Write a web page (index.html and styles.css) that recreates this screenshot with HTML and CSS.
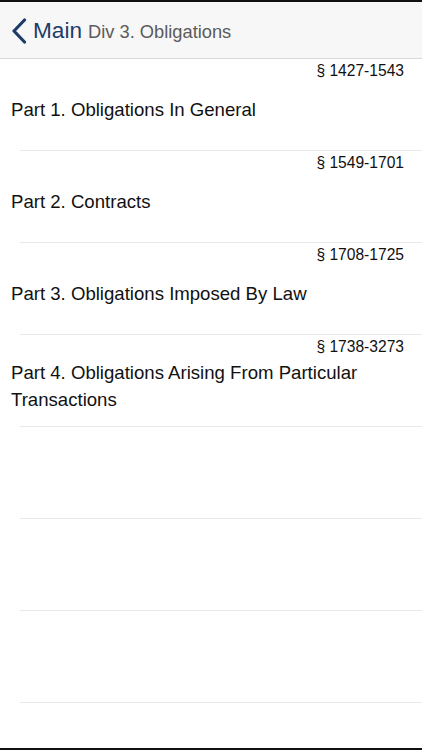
FILE: index.html
```html
<!DOCTYPE html>
<html>
<head>
<meta charset="utf-8">
<link rel="stylesheet" href="styles.css">
</head>
<body>
<div class="status"></div>
<header class="nav">
  <svg class="chev" width="16" height="26" viewBox="0 0 16 26"><path d="M13.5 2 L3 13 L13.5 24" fill="none" stroke="#1d3c68" stroke-width="3.2" stroke-linecap="round" stroke-linejoin="round"/></svg>
  <span class="back">Main</span>
  <span class="title">Div 3. Obligations</span>
</header>
<main class="list">
  <div class="row">
    <div class="range">§ 1427-1543</div>
    <div class="name">Part 1. Obligations In General</div>
  </div>
  <div class="row">
    <div class="range">§ 1549-1701</div>
    <div class="name">Part 2. Contracts</div>
  </div>
  <div class="row">
    <div class="range">§ 1708-1725</div>
    <div class="name">Part 3. Obligations Imposed By Law</div>
  </div>
  <div class="row">
    <div class="range">§ 1738-3273</div>
    <div class="name">Part 4. Obligations Arising From Particular Transactions</div>
  </div>
  <div class="row"></div>
  <div class="row"></div>
  <div class="row"></div>
</main>
<div class="bottom"></div>
</body>
</html>
```
FILE: styles.css
```css
html, body {
  margin: 0;
  padding: 0;
  background: #fff;
  font-family: "Liberation Sans", Arial, sans-serif;
  overflow: hidden;
}
body {
  width: 422px;
  height: 750px;
  position: relative;
}
.status {
  height: 2px;
  background: #111;
}
.nav {
  background: #f7f7f7;
  border-bottom: 1px solid #d9d9d9;
  display: flex;
  align-items: center;
  padding-left: 11px;
  box-sizing: border-box;
  height: 57px;
}
.chev {
  margin-right: 6px;
  margin-top: 1px;
}
.back {
  color: #1d3c68;
  font-size: 22.6px;
  margin-right: 6px;
  margin-top: 1px;
}
.title {
  color: #5b5b5b;
  font-size: 18.3px;
  margin-top: 3px;
}
.list {
  display: flex;
  flex-direction: column;
}
.row {
  height: 91px;
  flex: none;
  display: flex;
  flex-direction: column;
  position: relative;
}
.row::after {
  content: "";
  position: absolute;
  left: 20px;
  right: 0;
  bottom: -1px;
  height: 1px;
  background: #e8e8e8;
}
.row + .row {
  margin-top: 1px;
}
.range {
  text-align: right;
  padding: 3px 18px 0 0;
  font-size: 15.6px;
  line-height: 18px;
  color: #111;
}
.name {
  flex: 1;
  display: flex;
  align-items: center;
  padding: 0 40px 11px 11px;
  font-size: 18.6px;
  line-height: 27px;
  color: #111;
}
.bottom {
  position: absolute;
  left: 0;
  right: 0;
  bottom: 0;
  height: 2px;
  background: #111;
}
```
